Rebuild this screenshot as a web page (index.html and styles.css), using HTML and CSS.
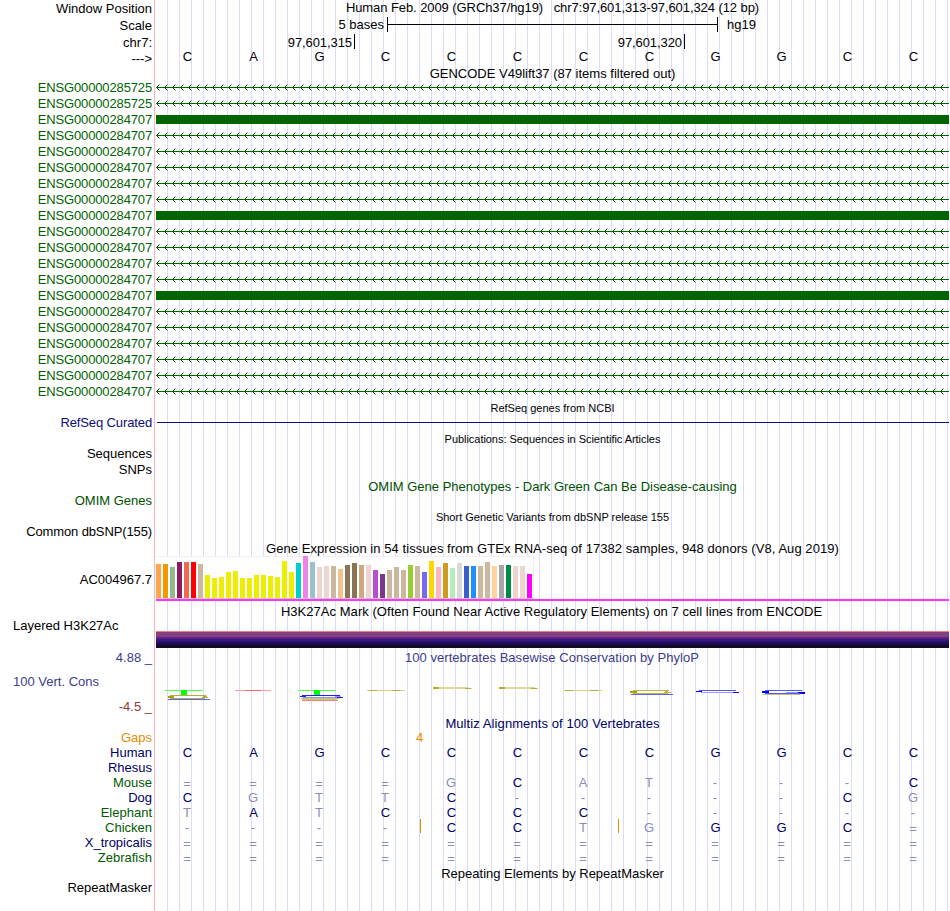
FILE: index.html
```html
<!DOCTYPE html>
<html lang="en">
<head>
<meta charset="utf-8">
<title>Genome Browser chr7:97,601,313-97,601,324</title>
<link rel="stylesheet" href="styles.css">
</head>
<body>
<svg class="defs" aria-hidden="true">
  <defs>
    <pattern id="intron" width="8" height="16" patternUnits="userSpaceOnUse">
      <path class="strand" d="M0 7h8v1H0zM1 6h1v1H1zM1 8h1v1H1zM2 5h1v1H2zM2 9h1v1H2z"/>
      <path class="strand tip" d="M3 4h1v1H3zM3 10h1v1H3z"/>
    </pattern>
  </defs>
</svg>
<main class="browser">
  <div class="row h17"><div class="label">Window Position</div><div class="data title up1 pos">Human Feb. 2009 (GRCh37/hg19)   chr7:97,601,313-97,601,324 (12 bp)</div></div>
  <div class="row h17"><div class="label">Scale</div><div class="data scale"><span class="scale-text">5 bases</span><span class="scale-bar"></span><span>hg19</span></div></div>
  <div class="row h16"><div class="label down1">chr7:</div><div class="data ticks"><span class="tick">97,601,315</span><span class="tick">97,601,320</span></div></div>
  <div class="row h16"><div class="label down1">---&gt;</div><div class="data bases up1"><b>C</b><b>A</b><b>G</b><b>C</b><b>C</b><b>C</b><b>C</b><b>C</b><b>G</b><b>G</b><b>C</b><b>C</b></div></div>
  <div class="row h14"><div class="data title down1">GENCODE V49lift37 (87 items filtered out)</div></div>

  <section class="genes">
    <div class="row h16"><div class="label">ENSG00000285725</div><svg class="data introns"><rect width="793" height="16" fill="url(#intron)"/></svg></div>
    <div class="row h16"><div class="label">ENSG00000285725</div><svg class="data introns"><rect width="793" height="16" fill="url(#intron)"/></svg></div>
    <div class="row h16"><div class="label">ENSG00000284707</div><div class="data exon"></div></div>
    <div class="row h16"><div class="label">ENSG00000284707</div><svg class="data introns"><rect width="793" height="16" fill="url(#intron)"/></svg></div>
    <div class="row h16"><div class="label">ENSG00000284707</div><svg class="data introns"><rect width="793" height="16" fill="url(#intron)"/></svg></div>
    <div class="row h16"><div class="label">ENSG00000284707</div><svg class="data introns"><rect width="793" height="16" fill="url(#intron)"/></svg></div>
    <div class="row h16"><div class="label">ENSG00000284707</div><svg class="data introns"><rect width="793" height="16" fill="url(#intron)"/></svg></div>
    <div class="row h16"><div class="label">ENSG00000284707</div><svg class="data introns"><rect width="793" height="16" fill="url(#intron)"/></svg></div>
    <div class="row h16"><div class="label">ENSG00000284707</div><div class="data exon"></div></div>
    <div class="row h16"><div class="label">ENSG00000284707</div><svg class="data introns"><rect width="793" height="16" fill="url(#intron)"/></svg></div>
    <div class="row h16"><div class="label">ENSG00000284707</div><svg class="data introns"><rect width="793" height="16" fill="url(#intron)"/></svg></div>
    <div class="row h16"><div class="label">ENSG00000284707</div><svg class="data introns"><rect width="793" height="16" fill="url(#intron)"/></svg></div>
    <div class="row h16"><div class="label">ENSG00000284707</div><svg class="data introns"><rect width="793" height="16" fill="url(#intron)"/></svg></div>
    <div class="row h16"><div class="label">ENSG00000284707</div><div class="data exon"></div></div>
    <div class="row h16"><div class="label">ENSG00000284707</div><svg class="data introns"><rect width="793" height="16" fill="url(#intron)"/></svg></div>
    <div class="row h16"><div class="label">ENSG00000284707</div><svg class="data introns"><rect width="793" height="16" fill="url(#intron)"/></svg></div>
    <div class="row h16"><div class="label">ENSG00000284707</div><svg class="data introns"><rect width="793" height="16" fill="url(#intron)"/></svg></div>
    <div class="row h16"><div class="label">ENSG00000284707</div><svg class="data introns"><rect width="793" height="16" fill="url(#intron)"/></svg></div>
    <div class="row h16"><div class="label">ENSG00000284707</div><svg class="data introns"><rect width="793" height="16" fill="url(#intron)"/></svg></div>
    <div class="row h16"><div class="label">ENSG00000284707</div><svg class="data introns"><rect width="793" height="16" fill="url(#intron)"/></svg></div>
  </section>

  <div class="row h16"><div class="data title small">RefSeq genes from NCBI</div></div>
  <div class="row h14"><div class="label refseq tight">RefSeq Curated</div><div class="data refline"></div></div>
  <div class="row h17"><div class="data title small pubs down1">Publications: Sequences in Scientific Articles</div></div>
  <div class="row h15"><div class="label up1">Sequences</div></div>
  <div class="row h16"><div class="label">SNPs</div></div>
  <div class="row h16"><div class="data title omim down1">OMIM Gene Phenotypes - Dark Green Can Be Disease-causing</div></div>
  <div class="row h14"><div class="label omim">OMIM Genes</div></div>
  <div class="row h17"><div class="data title small down1">Short Genetic Variants from dbSNP release 155</div></div>
  <div class="row h14"><div class="label tight">Common dbSNP(155)</div></div>
  <div class="row h17"><div class="data title gtex-title down1">Gene Expression in 54 tissues from GTEx RNA-seq of 17382 samples, 948 donors (V8, Aug 2019)</div></div>
  <div class="row h45"><div class="label">AC004967.7</div>
    <div class="data gtex"><div class="bars">
      <i style="height:34px;background:#ffa54f"></i><i style="height:34px;background:#ee9a00"></i><i style="height:31px;background:#8fbc8f"></i><i style="height:36px;background:#8b1c62"></i><i style="height:36px;background:#ee6a50"></i><i style="height:36px;background:#ff0000"></i><i style="height:34px;background:#cdb79e"></i>
      <i style="height:23px;background:#eeee00"></i><i style="height:20px;background:#eeee00"></i><i style="height:21px;background:#eeee00"></i><i style="height:26px;background:#eeee00"></i><i style="height:27px;background:#eeee00"></i><i style="height:20px;background:#eeee00"></i><i style="height:20px;background:#eeee00"></i><i style="height:23px;background:#eeee00"></i><i style="height:23px;background:#eeee00"></i><i style="height:22px;background:#eeee00"></i><i style="height:21px;background:#eeee00"></i><i style="height:37px;background:#eeee00"></i><i style="height:26px;background:#eeee00"></i>
      <i style="height:35px;background:#00cdcd"></i><i style="height:42px;background:#ee82ee"></i><i style="height:36px;background:#9ac0cd"></i><i style="height:31px;background:#eed5d2"></i><i style="height:32px;background:#eed5d2"></i><i style="height:32px;background:#cdb79e"></i><i style="height:29px;background:#eec591"></i><i style="height:33px;background:#8b7355"></i><i style="height:35px;background:#8b7355"></i><i style="height:33px;background:#cdaa7d"></i><i style="height:33px;background:#eed5d2"></i><i style="height:28px;background:#b452cd"></i><i style="height:24px;background:#7a378b"></i><i style="height:28px;background:#cdb79e"></i><i style="height:31px;background:#cdb79e"></i><i style="height:28px;background:#cdb79e"></i>
      <i style="height:33px;background:#9acd32"></i><i style="height:32px;background:#cdb79e"></i><i style="height:26px;background:#7a67ee"></i><i style="height:37px;background:#ffd700"></i><i style="height:31px;background:#ffb6c1"></i><i style="height:35px;background:#cd9b1d"></i><i style="height:30px;background:#b4eeb4"></i><i style="height:35px;background:#d9d9d9"></i><i style="height:32px;background:#3a5fcd"></i><i style="height:32px;background:#1e90ff"></i><i style="height:32px;background:#cdb79e"></i><i style="height:36px;background:#cdb79e"></i><i style="height:32px;background:#ffd39b"></i><i style="height:33px;background:#a6a6a6"></i><i style="height:33px;background:#008b45"></i><i style="height:32px;background:#eed5d2"></i><i style="height:32px;background:#eed5d2"></i><i style="height:24px;background:#ff00ff"></i>
    </div></div>
  </div>
  <div class="row h19"><div class="data title h3k-title down1">H3K27Ac Mark (Often Found Near Active Regulatory Elements) on 7 cell lines from ENCODE</div></div>
  <div class="row h11"><div class="label left">Layered H3K27Ac</div></div>
  <div class="row h17"><div class="data h3k"></div></div>
  <div class="row h19 phylop"><div class="label">4.88 _</div><div class="data title phylop-title">100 vertebrates Basewise Conservation by PhyloP</div></div>
  <div class="row h30 phylop"><div class="label left">100 Vert. Cons</div>
    <svg class="data logos" viewBox="156 667 793 38" width="793" height="38" shape-rendering="crispEdges">
      <g fill="#50ff50"><path d="M165 690h38v1h-38zM298 690h38v1h-38z"/></g>
      <g fill="#00ff00"><path d="M181 690h6v5h-6zM314 690h6v5h-6z"/></g>
      <g fill="#a8a000"><path d="M168 696h6v2h-6z"/></g>
      <g fill="#b4ad38"><path d="M170 695h36v1h-36zM170 698h35v1h-35zM203 696h4v1h-4zM202 697h6v1h-6z"/></g>
      <path fill="#fff" d="M175 696h27v2h-27z"/>
      <path fill="#6060ff" d="M168 699h42v1h-42z"/>
      <path fill="#ff9c9c" d="M235 690h36v1h-36z"/>
      <path fill="#ff6464" d="M245 690h16v1h-16z"/>
      <g fill="#2020ff"><path d="M302 695h38v1h-38zM300 696h6v1h-6zM337 697h6v1h-6z"/></g>
      <path fill="#9090ff" d="M303 697h34v1h-34zM335 696h6v1h-6z"/>
      <path fill="#c8c280" d="M301 698h39v1h-39zM302 699h35v1h-35z"/>
      <path fill="#ff8080" d="M302 700h36v1h-36z"/>
      <g fill="#d2cf88"><path d="M367 690h38v1h-38zM564 690h38v1h-38z"/></g>
      <g fill="#b3af48"><path d="M369 690h8v1h-8zM392 690h8v1h-8zM565 690h8v1h-8zM590 690h8v1h-8z"/></g>
      <g fill="#ddd99c"><path d="M433 687h36v1h-36zM436 688h36v1h-36zM499 687h36v1h-36zM502 688h36v1h-36z"/></g>
      <g fill="#b3ad32"><path d="M433 687h6v2h-6zM465 688h6v1h-6zM499 687h6v2h-6zM531 688h6v1h-6z"/></g>
      <path fill="#fff" d="M637 691h28v2h-28z"/>
      <path fill="#a8a000" d="M630 691h7v2h-7z"/>
      <path fill="#bdb751" d="M633 690h36v1h-36zM633 693h35v1h-35zM665 691h3v1h-3zM664 692h7v1h-7z"/>
      <path fill="#6060f0" d="M631 694h42v1h-42z"/>
      <path fill="#fff" d="M702 691h32v1h-32zM769 691h30v2h-30z"/>
      <path fill="#5555ff" d="M699 690h37v1h-37zM765 690h37v1h-37zM765 693h38v1h-38z"/>
      <path fill="#9a9aff" d="M701 692h33v1h-33zM786 692h13v1h-13z"/>
      <path fill="#0000ff" d="M696 691h6v1h-6zM733 692h6v1h-6zM762 691h7v2h-7zM798 692h7v1h-7zM800 693h5v1h-5z"/>
      <path fill="#c6c080" d="M763 694h37v1h-37z"/>
    </svg>
  </div>
  <div class="row h19"><div class="label neg">-4.5 _</div></div>
  <div class="row h14"><div class="data title navy multiz down1">Multiz Alignments of 100 Vertebrates</div></div>

  <section class="align">
    <div class="row h15"><div class="label gap">Gaps</div><div class="data bases"><b></b><b></b><b></b><b></b><b class="gap count">4</b></div></div>
    <div class="row h15"><div class="label navy">Human</div><div class="data bases"><b>C</b><b>A</b><b>G</b><b>C</b><b>C</b><b>C</b><b>C</b><b>C</b><b>G</b><b>G</b><b>C</b><b>C</b></div></div>
    <div class="row h15"><div class="label navy">Rhesus</div></div>
    <div class="row h15"><div class="label green">Mouse</div><div class="data bases"><s class="eq">=</s><s class="eq">=</s><s class="eq">=</s><s class="eq">=</s><s>G</s><b>C</b><s>A</s><s>T</s><s>-</s><s>-</s><s>-</s><b>C</b></div></div>
    <div class="row h15"><div class="label navy">Dog</div><div class="data bases"><b>C</b><s>G</s><s>T</s><s>T</s><b>C</b><s>-</s><s>-</s><s>-</s><s>-</s><s>-</s><b>C</b><s>G</s></div></div>
    <div class="row h15"><div class="label green">Elephant</div><div class="data bases"><s>T</s><b>A</b><s>T</s><b>C</b><b>C</b><b>C</b><b>C</b><s>-</s><s>-</s><s>-</s><s>-</s><s>-</s></div></div>
    <div class="row h15"><div class="label green">Chicken</div><div class="data bases"><s>-</s><s>-</s><s>-</s><s>-</s><b class="insert">C</b><b>C</b><s>T</s><s class="insert">G</s><b>G</b><b>G</b><b>C</b><s class="eq">=</s></div></div>
    <div class="row h15"><div class="label navy">X_tropicalis</div><div class="data bases eq"><s>=</s><s>=</s><s>=</s><s>=</s><s>=</s><s>=</s><s>=</s><s>=</s><s>=</s><s>=</s><s>=</s><s>=</s></div></div>
    <div class="row h15"><div class="label green">Zebrafish</div><div class="data bases eq"><s>=</s><s>=</s><s>=</s><s>=</s><s>=</s><s>=</s><s>=</s><s>=</s><s>=</s><s>=</s><s>=</s><s>=</s></div></div>
  </section>
  <div class="row h15"><div class="data title down1">Repeating Elements by RepeatMasker</div></div>
  <div class="row h15"><div class="label">RepeatMasker</div></div>
</main>
</body>
</html>
```
FILE: styles.css
```css
body { margin: 0; background: #fff; }
.defs { position: absolute; width: 0; height: 0; }
.browser {
  width: 949px;
  height: 911px;
  overflow: hidden;
  font: 13px "Liberation Sans", Arial, sans-serif;
  color: #000;
  background:
    linear-gradient(#ffb4b4, #ffb4b4) 154px 0 / 1px 100% no-repeat,
    repeating-linear-gradient(90deg, transparent 0 11px, #dcdcf8 11px 12px) 156px 0 / 793px 100% no-repeat;
}
.row { display: grid; grid-template-columns: 152px 4px 793px; white-space: pre; }
.label { grid-column: 1; grid-row: 1; text-align: right; }
.label.left { text-align: left; padding-left: 13px; }
.data { grid-column: 3; grid-row: 1; }
.title { text-align: center; }
.small { font-size: 11px; }
.up1 { margin-top: -1px; }
.down1 { margin-top: 1px; margin-bottom: -1px; }
.h11 { height: 11px; line-height: 11px; }
.h14 { height: 14px; line-height: 14px; }
.h15 { height: 15px; line-height: 15px; }
.h16 { height: 16px; line-height: 16px; }
.h17 { height: 17px; line-height: 17px; }
.h19 { height: 19px; line-height: 19px; }
.h30 { height: 30px; line-height: 30px; }
.h45 { height: 45px; line-height: 47px; }

.pos { letter-spacing: -0.08px; }
.pubs { letter-spacing: -0.04px; }
.tight { letter-spacing: -0.12px; }
.gtex-title { letter-spacing: 0.062px; }
.h3k-title { letter-spacing: 0.043px; padding-right: 2px; }
.phylop-title { letter-spacing: 0.045px; padding-right: 1px; }
.multiz { letter-spacing: 0.09px; }

.scale { display: flex; line-height: 15px; }
.scale-text { width: 228px; text-align: right; }
.scale-bar {
  width: 329px;
  height: 15px;
  margin: 0 9px 0 3px;
  border: solid #000;
  border-width: 0 1px;
  background: linear-gradient(#000, #000) 0 7px / 100% 1px no-repeat;
}
.ticks { display: flex; }
.tick { width: 196px; height: 15px; line-height: 17px; padding-right: 2px; border-right: 1px solid #000; text-align: right; letter-spacing: -0.08px; }
.tick + .tick { width: 327px; }

.bases { display: grid; grid-template-columns: repeat(12, 66px); margin-left: -2px; text-align: center; }
.bases b, .bases s { position: relative; font-weight: normal; text-decoration: none; }
.bases b { padding-left: 1px; }
.align .bases { color: #000064; }
.align .bases s { color: #8c8cb8; }
.align .bases .gap { color: #e68c00; }
.align .bases .count { text-align: left; padding-left: 0; margin-left: -2px; }
.eq { padding-top: 1px; margin-bottom: -1px; }
.insert::before { content: ""; position: absolute; left: 2px; top: -1px; width: 1px; height: 14px; background: #e68c00; }

.genes { color: #006400; }
.genes .label { letter-spacing: -0.14px; }
.introns { width: 793px; height: 16px; display: block; }
.strand { fill: #006400; }
.tip { opacity: .5; }
.exon { height: 9px; margin-top: 3px; background: #006400; }
.refseq { color: #0c0c78; }
.refline { height: 1px; margin: 6px 0 0 1px; background: #0c0c78; }
.omim { color: #005000; }
.green { color: #005a00; }
.navy { color: #000064; }
.gap { color: #e68c00; }
.phylop { color: #3c3c8c; }
.neg { color: #8c3c3c; }

.gtex { border-bottom: 2px solid #ff32ff; height: 43px; }
.bars {
  display: flex;
  align-items: flex-end;
  gap: 2px;
  width: 378px;
  height: 43px;
  box-sizing: border-box;
  border-bottom: 1px solid #c8c8c8;
  background: #fff;
  box-shadow: inset 0 1px #f0f0f0, inset -1px 0 #f0f0f0;
}
.bars i { width: 5px; flex: none; }
.h3k {
  height: 17px;
  background: linear-gradient(#f08080 0 1px, #824080 1px 6px, #64207c 6px 8px, #321a88 8px 10px, #2c1068 10px 12px, #180c58 12px 14px, #140a24 14px);
}
```
